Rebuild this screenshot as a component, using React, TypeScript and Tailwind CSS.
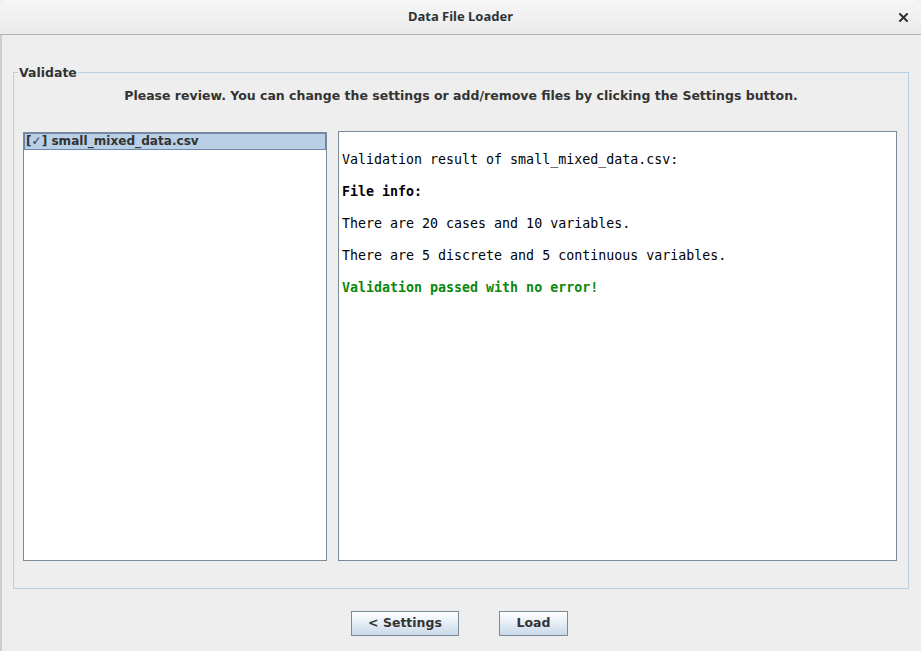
import React from "react";

export default function App() {
  const sans = { fontFamily: '"DejaVu Sans", "Liberation Sans", sans-serif' };
  const mono = { fontFamily: '"DejaVu Sans Mono", "Liberation Mono", monospace' };
  return (
    <div className="w-[921px] h-[651px] bg-[#eeeeee] flex flex-col overflow-hidden" style={sans}>
      {/* Title bar */}
      <div className="h-[35px] shrink-0 relative flex items-center justify-center rounded-t-[6px] bg-gradient-to-b from-[#f6f6f6] to-[#ebebeb] border-b border-[#b3b3b3]">
        <span className="text-[13px] font-bold text-[#2e3436]" style={{ fontFamily: '"Noto Sans", "Open Sans", sans-serif' }}>
          Data File Loader
        </span>
        <svg className="absolute right-[13px] top-[13px]" width="9" height="9" viewBox="0 0 9 9">
          <path d="M1 1 L8 8 M8 1 L1 8" stroke="#2e3436" strokeWidth="2" strokeLinecap="square" />
        </svg>
      </div>

      {/* Body */}
      <div className="flex-1 flex flex-col border-l-2 border-[#c9cfd6]">
        <fieldset className="ml-[11px] mt-[30px] w-[896px] h-[524px] border border-[#b8cfe5] px-0 pb-[27px] flex flex-col">
          <legend className="ml-[4px] px-[1px] text-[12.5px] leading-[15px] font-bold text-[#333333]">Validate</legend>
          <div className="text-center text-[12.5px] leading-[16px] font-bold text-[#333333] mt-[8px]">
            Please review. You can change the settings or add/remove files by clicking the Settings button.
          </div>
          <div className="flex-1 flex gap-[11px] pl-[9px] pr-[11px] mt-[28px]">
            <div className="w-[304px] h-[429px] bg-white border border-[#7a8a99]">
              <div className="h-[17px] bg-[#b8cfe5] border border-[#6b86a8] flex items-center pl-[1px] text-[12.1px] font-bold text-[#333333] whitespace-nowrap">
                [✓] small_mixed_data.csv
              </div>
            </div>
            <div className="flex-1 h-[430px] -mt-[1px] bg-white border border-[#7a8a99] pt-[12px] pl-[3px] text-[13.3px] text-black" style={mono}>
              <div className="h-[32px] leading-[32px]">Validation result of small_mixed_data.csv:</div>
              <div className="h-[32px] leading-[32px] font-bold">File info:</div>
              <div className="h-[32px] leading-[32px]">There are 20 cases and 10 variables.</div>
              <div className="h-[32px] leading-[32px]">There are 5 discrete and 5 continuous variables.</div>
              <div className="h-[32px] leading-[32px] font-bold text-[#0b870b]">Validation passed with no error!</div>
            </div>
          </div>
        </fieldset>

        <div className="flex justify-center gap-[40px] mt-[22px] pr-[4px]">
          <button className="w-[108px] h-[25px] border border-[#7a8a99] bg-gradient-to-b from-white to-[#c9d9ea] text-[12.5px] font-bold text-[#333333] flex items-center justify-center">
            &lt; Settings
          </button>
          <button className="w-[69px] h-[25px] border border-[#7a8a99] bg-gradient-to-b from-white to-[#c9d9ea] text-[12.5px] font-bold text-[#333333] flex items-center justify-center">
            Load
          </button>
        </div>
      </div>
    </div>
  );
}
